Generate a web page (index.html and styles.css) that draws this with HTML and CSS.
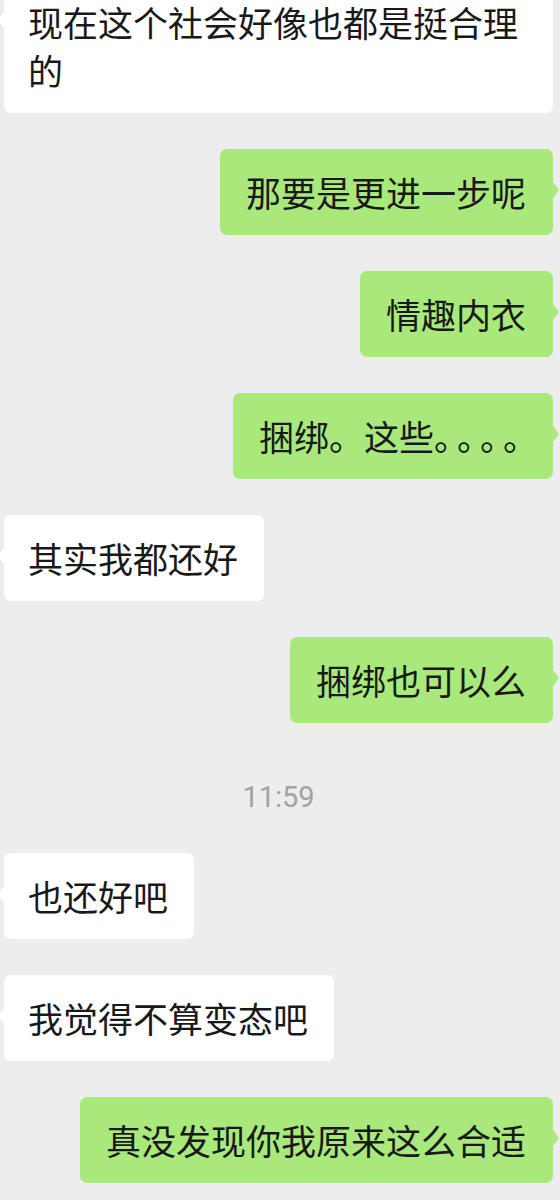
FILE: index.html
```html
<!DOCTYPE html>
<html lang="zh-CN">
<head>
    <meta charset="UTF-8">
    <meta name="viewport" content="width=device-width, initial-scale=1.0">
    <title>聊天记录</title>
    <link rel="stylesheet" href="styles.css">
</head>
<body>
    <div class="chat">
        <div class="row left">
            <div class="bubble">现在这个社会好像也都是挺合理的</div>
        </div>
        <div class="row right">
            <div class="bubble">那要是更进一步呢</div>
        </div>
        <div class="row right">
            <div class="bubble">情趣内衣</div>
        </div>
        <div class="row right">
            <div class="bubble">捆绑。这些<span class="dots">。。。。</span></div>
        </div>
        <div class="row left">
            <div class="bubble">其实我都还好</div>
        </div>
        <div class="row right">
            <div class="bubble">捆绑也可以么</div>
        </div>

        <div class="time">11:59</div>

        <div class="row left">
            <div class="bubble">也还好吧</div>
        </div>
        <div class="row left">
            <div class="bubble">我觉得不算变态吧</div>
        </div>
        <div class="row right">
            <div class="bubble">真没发现你我原来这么合适</div>
        </div>
    </div>
</body>
</html>
```

FILE: styles.css
```css
body {
    margin: 0;
    background-color: #ededed;
    font-family: "Noto Sans CJK SC", "Noto Sans", sans-serif;
    overflow: hidden;
}

.chat {
    display: flex;
    flex-direction: column;
    gap: 36px;
    margin-top: -21px;
    padding: 0 7px 0 4px;
}

.row {
    display: flex;
}

.row.right {
    justify-content: flex-end;
}

.bubble {
    position: relative;
    padding: 19px 27px 19px 26px;
    font-size: 35px;
    line-height: 48px;
    color: #191919;
    border-radius: 7px;
    background-color: #fff;
}

.row.left .bubble {
    padding: 19px 26px 19px 24px;
}

.row.right .bubble {
    background-color: #a9e97b;
}

/* 말풍선 꼬리 */
.bubble::after {
    content: "";
    position: absolute;
    top: 33px;
    border-style: solid;
    border-color: transparent;
}

.row.right .bubble::after {
    right: -6px;
    border-width: 8px 0 8px 6px;
    border-left-color: #a9e97b;
}

.row.left .bubble::after {
    left: -6px;
    border-width: 8px 6px 8px 0;
    border-right-color: #fff;
}

.dots {
    text-spacing-trim: space-all;
    letter-spacing: -12px;
}

.time {
    margin: 20px 0 2px;
    text-align: center;
    font-family: Roboto, "Liberation Sans", sans-serif;
    font-size: 29px;
    line-height: 36px;
    color: #a3a3a3;
}
```
